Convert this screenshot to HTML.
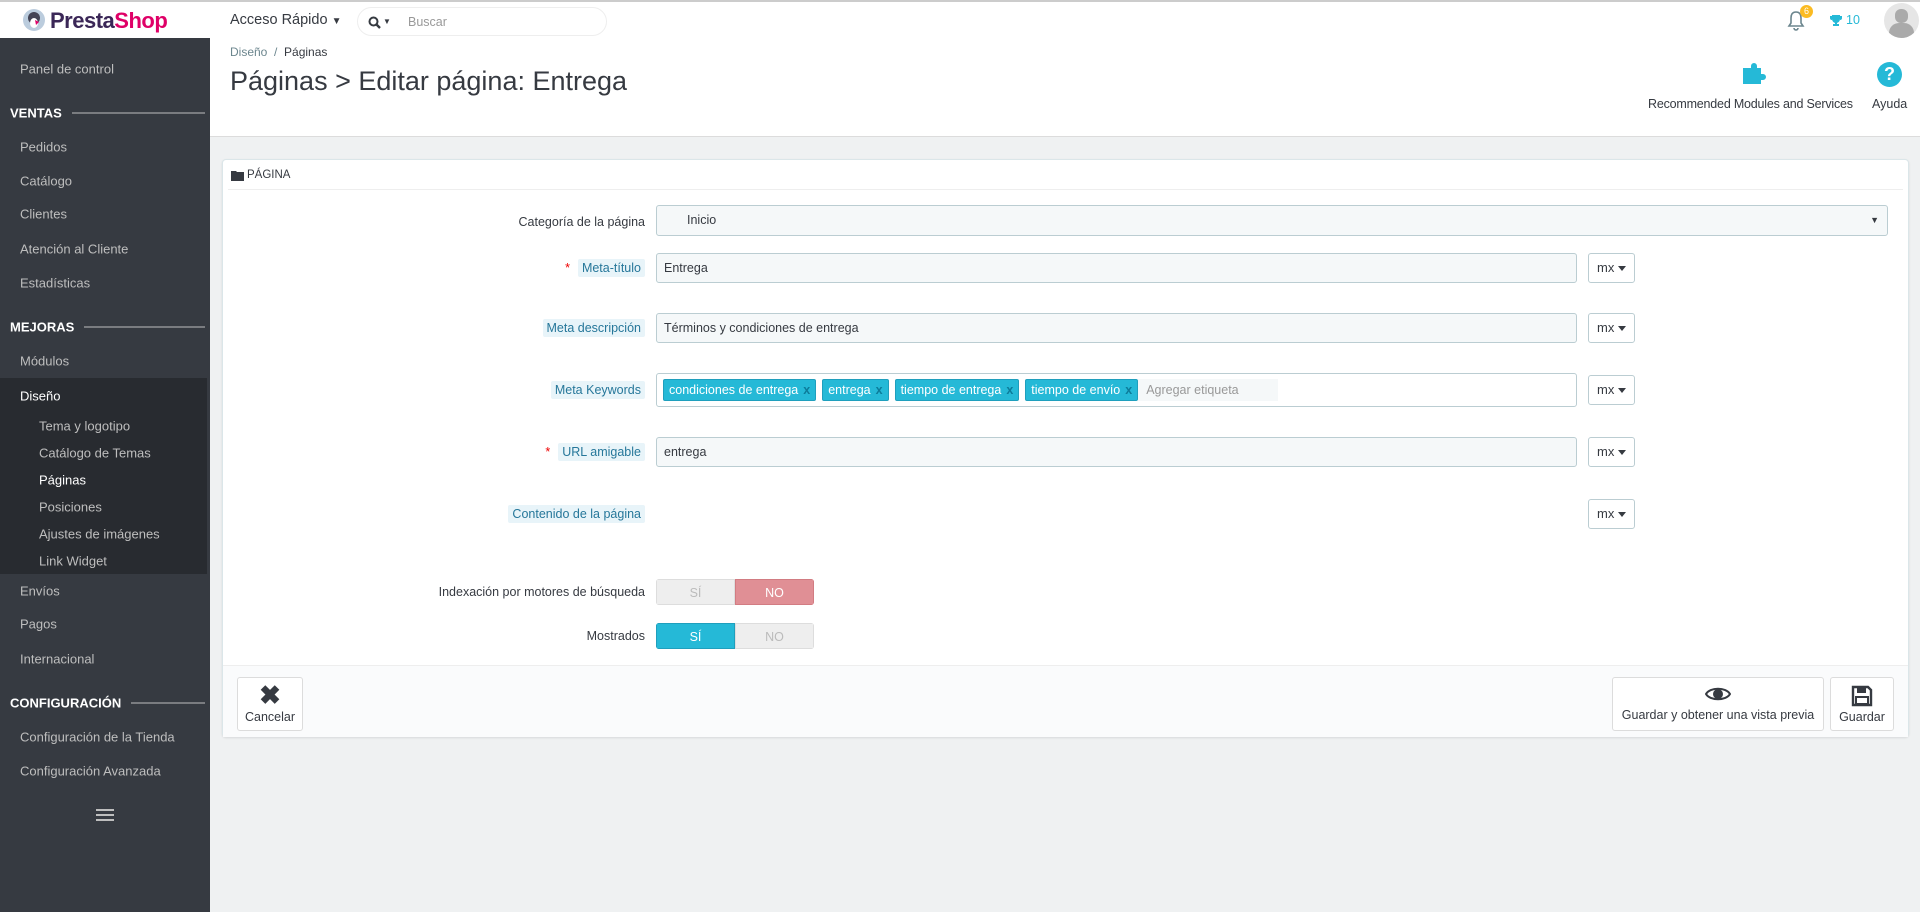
<!DOCTYPE html>
<html><head><meta charset="utf-8"><style>
*{box-sizing:border-box;margin:0;padding:0}
body{width:1920px;height:912px;overflow:hidden;background:#eff1f2;font-family:"Liberation Sans",sans-serif;font-size:12.5px;color:#363a41;position:relative}
.a{position:absolute}
#top{left:0;top:0;width:1920px;height:38px;background:#fff;border-top:2px solid #ccc;box-shadow:0 1px 2px rgba(0,0,0,.1)}
#side{left:0;top:38px;width:210px;height:874px;background:#363a41}
.si{position:absolute;left:20px;color:#bebebe;font-size:13px;transform:translateY(-50%)}
.sh{position:absolute;left:10px;color:#fff;font-weight:bold;font-size:13px;transform:translateY(-50%);display:flex;align-items:center;width:195px}
.sh:after{content:"";flex:1;height:1px;background:#bebebe;margin-left:10px}
.sub{position:absolute;left:39px;color:#bebebe;font-size:13px;transform:translateY(-50%)}
#head{left:210px;top:38px;width:1710px;height:99px;background:#fff;border-bottom:1px solid #dcdcdc}
.lbl{position:absolute;right:1275px;transform:translateY(-50%);font-size:12.5px;color:#363a41;white-space:nowrap}
.hl{background:#e8f4f9;color:#26779a;padding:2px 4px;border-radius:2px}
.inp{position:absolute;left:656px;width:921px;height:30px;background:#f5f8f9;border:1px solid #bbcdd2;border-radius:3px;padding:0 7px;line-height:28px;font-size:12.5px}
.mx{position:absolute;left:1588px;width:47px;height:30px;border:1px solid #bbcdd2;border-radius:3px;background:#fff;font-size:13px;line-height:28px;padding-left:8px}
.mx:after{content:"";position:absolute;right:8px;top:12px;border:4px solid transparent;border-top:5px solid #363a41}
.tag{display:inline-block;background:#25b9d7;border:1px solid #1f9fbd;color:#fff;height:22px;line-height:20px;padding:0 5px;margin-right:6px;border-radius:2px;font-size:12.5px}
.tag b{color:#0c7c9a;margin-left:5px;font-weight:bold}
.sw{position:absolute;left:656px;width:158px;height:26px;display:flex;border-radius:3px;overflow:hidden;font-size:12.5px}
.sw span{flex:1;text-align:center;line-height:26px}
.off{background:#eee;color:#bbb;border:1px solid #ddd}
.btn{position:absolute;background:#fff;border:1px solid #dcdcdc;border-radius:3px;text-align:center;font-size:12.5px;color:#363a41}
</style></head><body>
<div id="top" class="a">
 <svg class="a" style="left:22px;top:6px" width="24" height="24" viewBox="0 0 24 24"><circle cx="12" cy="12" r="11" fill="#bcd"/><circle cx="12" cy="10" r="6" fill="#445"/><ellipse cx="12" cy="15" rx="4" ry="5" fill="#fff"/><path d="M13 12l4 2-3 3z" fill="#df0067"/></svg>
 <div class="a" style="left:50px;top:6px;font-size:22px;font-weight:bold;letter-spacing:-0.5px"><span style="color:#3b2757">Presta</span><span style="color:#df0067">Shop</span></div>
 <div class="a" style="left:230px;top:10px;font-size:14.5px">Acceso Rápido <span style="font-size:10px">▼</span></div>
 <div class="a" style="left:357px;top:5px;width:250px;height:29px;border:1px solid #eee;border-radius:15px">
  <svg class="a" style="left:10px;top:8px" width="13" height="13" viewBox="0 0 13 13"><circle cx="5.5" cy="5.5" r="4" fill="none" stroke="#363a41" stroke-width="2"/><path d="M8.5 8.5l3.5 3.5" stroke="#363a41" stroke-width="2.4"/></svg>
  <div class="a" style="left:25px;top:9px;font-size:8px">▼</div>
  <div class="a" style="left:50px;top:7px;color:#999;font-size:12.5px">Buscar</div>
 </div>
 <svg class="a" style="left:1787px;top:8px" width="18" height="22" viewBox="0 0 18 22"><path d="M9 2c-4 0-5 3-5 6v5l-2 3h14l-2-3V8c0-3-1-6-5-6zM7 18a2 2 0 004 0" fill="none" stroke="#6c868e" stroke-width="1.6"/></svg>
 <div class="a" style="left:1800px;top:3px;width:13px;height:13px;border-radius:7px;background:#fbbb22;color:#fff;font-size:9px;text-align:center;line-height:13px">6</div>
 <svg class="a" style="left:1829px;top:12px" width="14" height="13" viewBox="0 0 14 13"><path d="M3 1h8v4a4 4 0 01-8 0zM3 2H1v2a2 2 0 002 2M11 2h2v2a2 2 0 01-2 2M6 8h2v2h2v2H4v-2h2z" fill="#25b9d7"/></svg>
 <div class="a" style="left:1846px;top:11px;color:#25b9d7;font-size:12.5px">10</div>
 <div class="a" style="left:1884px;top:1px;width:35px;height:35px;border-radius:50%;background:#e6e6e6;overflow:hidden"><div class="a" style="left:11px;top:6px;width:13px;height:14px;border-radius:6px;background:#aaa"></div><div class="a" style="left:5px;top:20px;width:25px;height:20px;border-radius:10px 10px 0 0;background:#aaa"></div></div>
</div>
<div id="side" class="a">
 <div class="si" style="top:31px">Panel de control</div>
 <div class="sh" style="top:75px">VENTAS</div>
 <div class="si" style="top:109px">Pedidos</div>
 <div class="si" style="top:143px">Catálogo</div>
 <div class="si" style="top:176px">Clientes</div>
 <div class="si" style="top:211px">Atención al Cliente</div>
 <div class="si" style="top:245px">Estadísticas</div>
 <div class="sh" style="top:289px">MEJORAS</div>
 <div class="si" style="top:323px">Módulos</div>
 <div class="a" style="left:0;top:340px;width:207px;height:196px;background:#282b30"></div>
 <div class="si" style="top:358px;color:#fff">Diseño</div>
 <div class="sub" style="top:388px">Tema y logotipo</div>
 <div class="sub" style="top:415px">Catálogo de Temas</div>
 <div class="sub" style="top:442px;color:#fff">Páginas</div>
 <div class="sub" style="top:469px">Posiciones</div>
 <div class="sub" style="top:496px">Ajustes de imágenes</div>
 <div class="sub" style="top:523px">Link Widget</div>
 <div class="si" style="top:553px">Envíos</div>
 <div class="si" style="top:586px">Pagos</div>
 <div class="si" style="top:621px">Internacional</div>
 <div class="sh" style="top:665px">CONFIGURACIÓN</div>
 <div class="si" style="top:699px">Configuración de la Tienda</div>
 <div class="si" style="top:733px">Configuración Avanzada</div>
 <div class="a" style="left:96px;top:771px;width:18px;height:2px;background:#bebebe;box-shadow:0 5px 0 #bebebe,0 10px 0 #bebebe"></div>
</div>
<div id="head" class="a">
 <div class="a" style="left:20px;top:7px;font-size:12px;color:#6c868e">Diseño &nbsp;/&nbsp; <span style="color:#363a41">Páginas</span></div>
 <div class="a" style="left:20px;top:28px;font-size:27px;color:#363a41">Páginas &gt; Editar página: Entrega</div>
 <svg class="a" style="left:1531px;top:22px" width="26" height="26" viewBox="0 0 26 26"><path d="M2 8h8V6a3 3 0 116 0v2h4v6h2a3 3 0 110 6h-2v4H2z" fill="#25b9d7"/></svg>
 <div class="a" style="left:1438px;top:59px;font-size:12.5px;letter-spacing:-0.2px">Recommended Modules and Services</div>
 <div class="a" style="left:1667px;top:24px;width:25px;height:25px;border-radius:50%;background:#25b9d7;color:#fff;font-weight:bold;font-size:18px;text-align:center;line-height:25px">?</div>
 <div class="a" style="left:1662px;top:59px;font-size:12.5px">Ayuda</div>
</div>
<div class="a" style="left:222px;top:159px;width:1687px;height:578px;background:#fff;border:1px solid #dbe6e9;border-radius:4px;box-shadow:0 1px 2px rgba(0,0,0,.1)">
 <svg class="a" style="left:8px;top:10px" width="13" height="11" viewBox="0 0 13 11"><path d="M0 1h5l1 1h7v9H0z" fill="#363a41"/></svg>
 <div class="a" style="left:24px;top:9px;font-size:11.5px;color:#363a41">PÁGINA</div>
 <div class="a" style="left:5px;top:29px;width:1675px;height:1px;background:#eee"></div>
 <div class="a" style="left:0;top:505px;width:1685px;height:72px;background:#fafbfc;border-top:1px solid #eee"></div>
 <div class="btn" style="left:14px;top:517px;width:66px;height:54px"><div style="font-size:26px;font-weight:bold;line-height:30px;margin-top:2px">✖</div><div>Cancelar</div></div>
 <div class="btn" style="left:1389px;top:517px;width:212px;height:54px"><svg style="margin-top:7px" width="26" height="18" viewBox="0 0 26 18"><path d="M1 9C5 2 21 2 25 9C21 16 5 16 1 9z" fill="none" stroke="#363a41" stroke-width="2"/><circle cx="13" cy="9" r="5" fill="#363a41"/></svg><div style="margin-top:2px">Guardar y obtener una vista previa</div></div>
 <div class="btn" style="left:1607px;top:517px;width:64px;height:54px"><svg style="margin-top:7px" width="22" height="22" viewBox="0 0 22 22"><path d="M2 2h15l3 3v15H2z" fill="none" stroke="#363a41" stroke-width="2.4"/><rect x="6" y="2" width="9" height="6" fill="#363a41"/><rect x="5" y="12" width="12" height="7" fill="none" stroke="#363a41" stroke-width="2"/></svg><div>Guardar</div></div>
</div>
<div class="lbl" style="top:222px">Categoría de la página</div>
<div class="a" style="left:656px;top:205px;width:1232px;height:31px;background:#f5f8f9;border:1px solid #bbcdd2;border-radius:3px;padding-left:30px;line-height:29px">Inicio<span style="position:absolute;right:8px;font-size:9px">▼</span></div>
<div class="lbl" style="top:268px"><span style="color:#e00;margin-right:8px">*</span><span class="hl">Meta-título</span></div>
<div class="inp" style="top:253px">Entrega</div><div class="mx" style="top:253px">mx</div>
<div class="lbl" style="top:328px"><span class="hl">Meta descripción</span></div>
<div class="inp" style="top:313px">Términos y condiciones de entrega</div><div class="mx" style="top:313px">mx</div>
<div class="lbl" style="top:390px"><span class="hl">Meta Keywords</span></div>
<div class="inp" style="top:373px;height:34px;background:#fff;padding:5px 6px;line-height:normal"><span class="tag">condiciones de entrega<b>x</b></span><span class="tag">entrega<b>x</b></span><span class="tag">tiempo de entrega<b>x</b></span><span class="tag" style="margin-right:0">tiempo de envío<b>x</b></span><span style="display:inline-block;background:#f5f8f9;color:#999;height:22px;line-height:22px;width:140px;padding-left:8px;vertical-align:top;font-size:12.5px">Agregar etiqueta</span></div>
<div class="mx" style="top:375px">mx</div>
<div class="lbl" style="top:452px"><span style="color:#e00;margin-right:8px">*</span><span class="hl">URL amigable</span></div>
<div class="inp" style="top:437px">entrega</div><div class="mx" style="top:437px">mx</div>
<div class="lbl" style="top:514px"><span class="hl">Contenido de la página</span></div>
<div class="mx" style="top:499px">mx</div>
<div class="lbl" style="top:592px">Indexación por motores de búsqueda</div>
<div class="sw" style="top:579px"><span class="off">SÍ</span><span style="background:#e08f95;color:#fff;border:1px solid #d27c82">NO</span></div>
<div class="lbl" style="top:636px">Mostrados</div>
<div class="sw" style="top:623px"><span style="background:#25b9d7;color:#fff;border:1px solid #1f9fbd">SÍ</span><span class="off">NO</span></div>
</body></html>
